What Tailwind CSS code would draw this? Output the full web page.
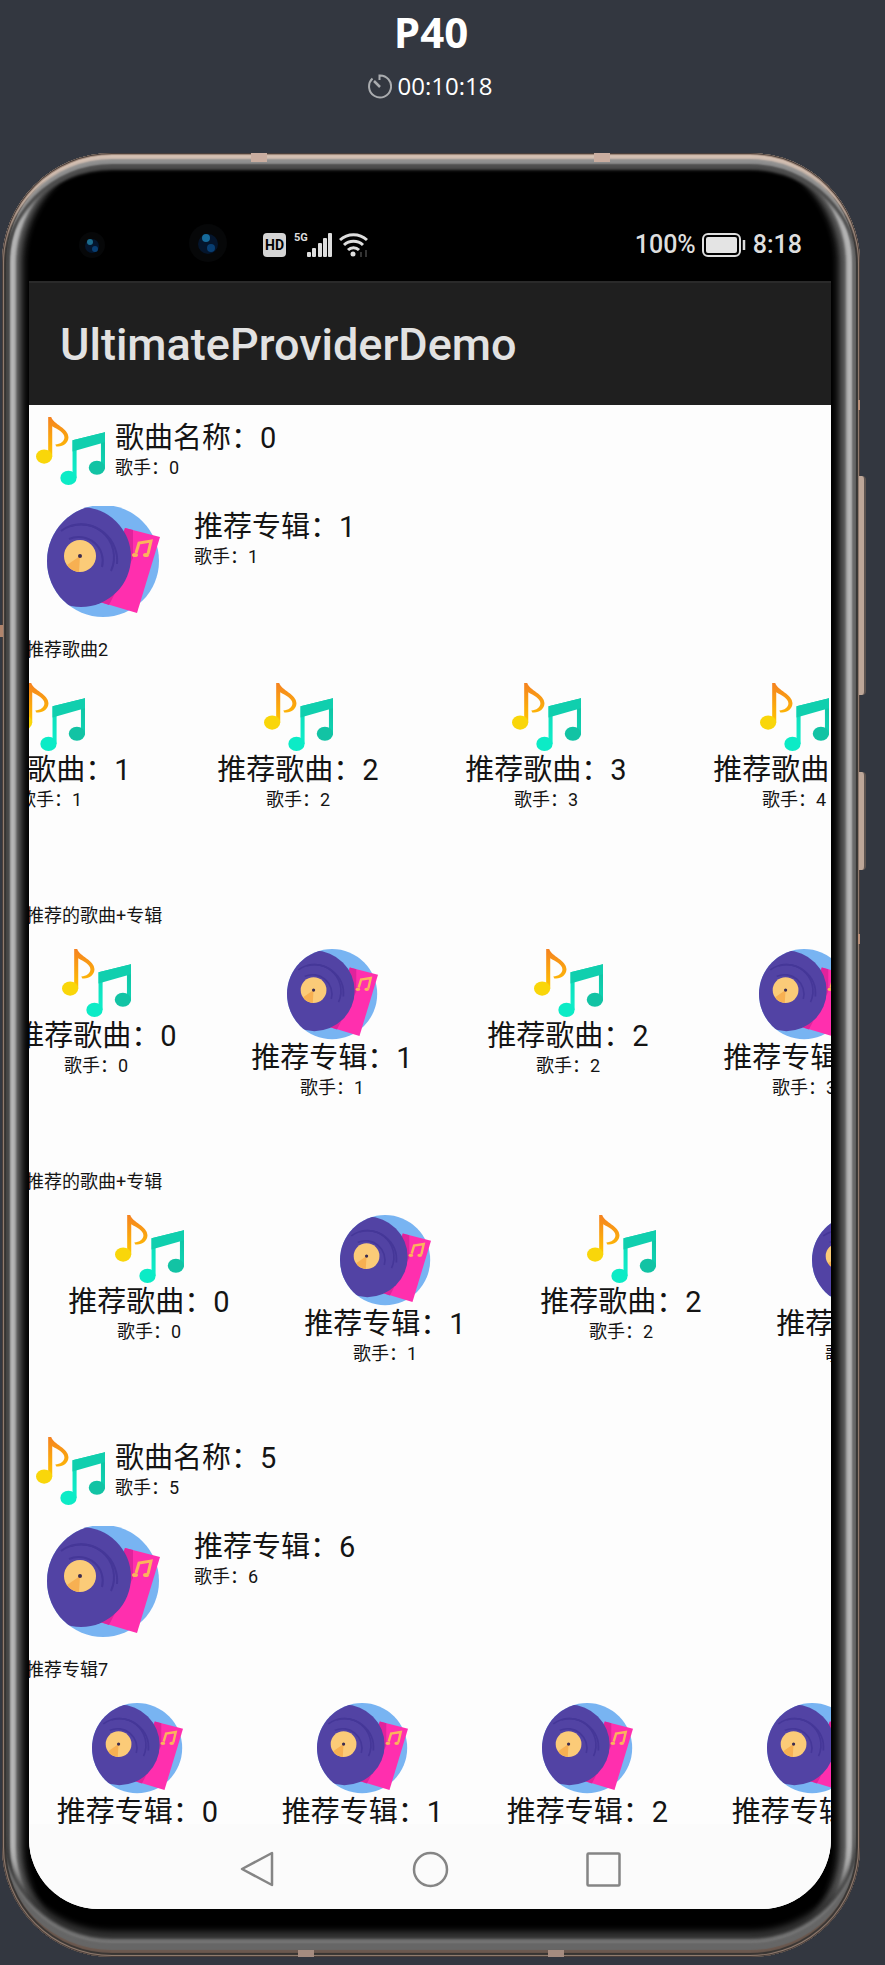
<!DOCTYPE html>
<html lang="zh-CN">
<head>
<meta charset="utf-8">
<meta name="viewport" content="width=device-width, initial-scale=1">
<title>P40</title>
<script src="https://cdn.jsdelivr.net/npm/@tailwindcss/browser@4"></script>
</head>
<body class="min-h-screen bg-[#333740] font-[Roboto,'Noto_Sans_CJK_SC',sans-serif] text-[#141414]">

<!-- Shared artwork -->
<svg class="absolute size-0" aria-hidden="true">
  <defs>
    <linearGradient id="gold" x1="0" y1="0" x2="0" y2="1"><stop offset="0" stop-color="#f58220"/><stop offset="1" stop-color="#ffc400"/></linearGradient>
    <linearGradient id="mint" x1="1" y1="0" x2="0" y2="1"><stop offset="0" stop-color="#0fbfa0"/><stop offset="1" stop-color="#0ff0cc"/></linearGradient>
    <clipPath id="round"><circle cx="56" cy="55" r="56"/></clipPath>
    <symbol id="song" viewBox="0 0 68 68">
      <path d="M12 39V0h3c2 7 17 11 17 20 0 6-6 10-12 9l-1-2c5 0 9-3 9-7 0-5-7-8-12-11v30z" fill="url(#gold)"/>
      <ellipse cx="8" cy="39" rx="8" ry="7" fill="#f9d60a"/>
      <path d="M36 60V23l32-8v36h-4V25l-24 7v28z" fill="url(#mint)"/>
      <path d="M36 23l32-8v10l-32 9z" fill="#10cfae"/>
      <ellipse cx="32" cy="60" rx="8" ry="7" fill="#0cebc6"/>
      <ellipse cx="60" cy="50" rx="8" ry="7" fill="#12c3a4"/>
    </symbol>
    <symbol id="album" viewBox="0 0 113 111">
      <circle cx="56" cy="55" r="56" fill="#78b4f2"/>
      <path d="M78 22l35 9-23 76-37-11z" fill="#ff2fae"/>
      <path d="M78 22l8 2v28L62 99l-9-3z" fill="#e0239c"/>
      <path d="M89 47l3-10 12-2-3 13" fill="none" stroke="#fbb45c" stroke-width="3"/>
      <ellipse cx="88" cy="49" rx="3" ry="2" fill="#fbb45c"/><ellipse cx="99" cy="49" rx="3" ry="2" fill="#fbb45c"/>
      <g clip-path="url(#round)">
        <circle cx="34" cy="51" r="50" fill="#5243a4"/>
        <g fill="none" stroke="#453798" stroke-width="2">
          <path d="M14 25a33 33 0 0 1 50 40"/><path d="M24 20a36 36 0 0 1 46 38"/><path d="M22 33a24 24 0 0 1 33 28"/>
        </g>
      </g>
      <circle cx="33" cy="50" r="16" fill="#fbcb78"/>
      <path d="M33 50l-13 9a16 16 0 0 0 12 7z" fill="#f7b052"/>
      <circle cx="33" cy="50" r="2" fill="#3b2c50"/>
    </symbol>
  </defs>
</svg>

<main class="pl-[2px] pr-[25px] pb-2">
  <header class="flex h-[153px] flex-col items-center font-['Open_Sans','Noto_Sans',sans-serif] text-white">
    <h1 class="mt-[4px] text-[42px] leading-[56px] font-bold">P40</h1>
    <div class="mt-[9px] flex items-center gap-[6px] pr-[3px] text-[24px] leading-[34px]">
      <svg class="size-[25px]" viewBox="0 0 25 25" fill="none" stroke="#aaacaf" stroke-width="2" aria-hidden="true"><path d="M5.500 4.500A11 11 0 1 0 12.500 1.500V6"/><path d="M7 7l6 6" stroke-width="2.500"/></svg>
      <time>00:10:18</time>
    </div>
  </header>

  <div class="relative rounded-[110px] bg-black pt-[20px] pr-[29px] pb-[48px] pl-[27px] shadow-[inset_0_0_0_1px_#4a3f3b,inset_0_0_1px_2px_#9a8375,inset_0_6px_2px_#d4c0b3,inset_0_0_1px_4px_#343231,inset_0_-7px_1px_#6b584e,inset_0_11px_2px_#8f8f8f,inset_0_17px_3px_#4d4d4d,inset_0_-14px_2px_#666,inset_0_-18px_3px_#777,inset_0_-26px_6px_#333,inset_8px_0_2px_#484848,inset_-8px_0_2px_#6a6a6a,inset_14px_0_3px_#b5b5b5,inset_-14px_0_3px_#b5b5b5,inset_19px_0_4px_#555,inset_-20px_0_4px_#555,inset_24px_0_4px_#1c1c1c,inset_-25px_0_4px_#1c1c1c]">
    <!-- Antenna bands and side keys -->
    <i class="absolute top-0 left-[29%] h-[9px] w-4 bg-[#c9ada0]"></i>
    <i class="absolute top-0 left-[69%] h-[9px] w-4 bg-[#c9ada0]"></i>
    <i class="absolute bottom-0 left-[34.500%] h-[7px] w-4 bg-[#a58c80]"></i>
    <i class="absolute bottom-0 right-[34.500%] h-[7px] w-4 bg-[#a58c80]"></i>
    <i class="absolute top-[472px] -left-[2px] h-[12px] w-[3px] bg-[#b0846c]"></i>
    <i class="absolute top-[247px] right-0 h-[10px] w-[2px] bg-[#b98f78]"></i>
    <i class="absolute top-[781px] right-0 h-[10px] w-[2px] bg-[#b98f78]"></i>
    <i class="absolute top-[323px] -right-[6px] h-[219px] w-[7px] rounded-r-sm border-r-2 border-[#5e5450] bg-[#bda698]"></i>
    <i class="absolute top-[619px] -right-[6px] h-[98px] w-[7px] rounded-r-sm border-r-2 border-[#5e5450] bg-[#bda698]"></i>

    <!-- Status bar -->
    <div class="flex h-[108px] items-center pt-[36px] pr-[29px] text-[25px] leading-[30px] font-medium text-[#dedede]">
      <svg class="ml-[48px] size-[30px]" viewBox="0 0 30 30" aria-hidden="true"><circle cx="15" cy="15" r="13" fill="#060708"/><circle cx="15" cy="16" r="7" fill="#04152c"/><circle cx="13" cy="12" r="3" fill="#1c6b8c"/><circle cx="18" cy="19" r="3" fill="#083e72"/></svg>
      <svg class="ml-[80px] size-[42px]" viewBox="0 0 42 42" aria-hidden="true"><circle cx="21" cy="19" r="19" fill="#060708"/><circle cx="21" cy="20" r="10" fill="#04152c"/><circle cx="19" cy="14" r="4" fill="#166a9a"/><circle cx="24" cy="24" r="4" fill="#083e72"/></svg>
      <span class="ml-[34px] flex h-[24px] w-[23px] items-center justify-center rounded-[4px] bg-[#d4d4d4] text-[14px] font-bold text-black">HD</span>
      <span class="ml-[8px] self-start pt-[23px] text-[11px] leading-[12px] font-bold">5G</span>
      <svg class="-ml-px h-[24px] w-[26px]" viewBox="0 0 26 24" fill="#dedede" aria-hidden="true"><rect x="0" y="19" width="4" height="5" rx="1"/><rect x="5" y="15" width="4" height="9" rx="1"/><rect x="11" y="10" width="4" height="14" rx="1"/><rect x="16" y="5" width="4" height="19" rx="1"/><rect x="21" y="0" width="4" height="24" rx="1"/></svg>
      <svg class="ml-[6px] h-[24px] w-[29px]" viewBox="0 0 29 24" fill="none" stroke="#dedede" stroke-width="3" aria-hidden="true"><path d="M1 7a20 20 0 0 1 27 0M5 12a14 14 0 0 1 19 0M9 17a8 8 0 0 1 11 0"/><circle cx="14" cy="21" r="2.500" fill="#dedede" stroke="none"/><path d="M22 19v5M27 17v7" stroke="#333" stroke-width="2"/></svg>
      <span class="ml-auto">100%</span>
      <svg class="ml-[6px] h-[24px] w-[44px]" viewBox="0 0 44 24" aria-hidden="true"><rect x="1" y="1" width="37" height="22" rx="5" fill="none" stroke="#dedede" stroke-width="2"/><rect x="4" y="4" width="31" height="16" rx="2" fill="#e4e4e4"/><path d="M42 7v10" stroke="#dedede" stroke-width="2.500"/></svg>
      <span class="ml-[7px]">8:18</span>
    </div>

    <!-- Screen -->
    <div class="relative overflow-hidden rounded-b-[70px] bg-[#fdfdfd]">
      <div class="flex h-[124px] items-center border-t-2 border-[#2a2a2a] bg-[#1f1f1f] px-[31px] pt-[2px]">
        <h2 class="text-[45px] leading-[52px] font-medium text-[#e2e2e2]">UltimateProviderDemo</h2>
      </div>

      <div class="pt-[11px] text-[18px] leading-[24px] whitespace-nowrap">
        <article class="flex h-[89px] gap-[10px] pl-[7px]">
          <svg class="mt-px size-[69px]"><use href="#song"/></svg>
          <div class="pt-[4px]"><h3 class="text-[29px] leading-[36px]">歌曲名称：0</h3><p>歌手：0</p></div>
        </article>
        <article class="flex h-[133px] gap-[34px] pl-[18px]">
          <svg class="mt-px h-[111px] w-[113px]"><use href="#album"/></svg>
          <div class="pt-[4px]"><h3 class="text-[29px] leading-[36px]">推荐专辑：1</h3><p>歌手：1</p></div>
        </article>

        <section class="h-[266px]">
          <h3 class="-ml-[3px]">推荐歌曲2</h3>
          <ul class="mt-[21px] -ml-[103px] flex">
            <li class="flex w-[248px] shrink-0 flex-col items-center"><svg class="size-[69px]"><use href="#song"/></svg><h4 class="text-[29px] leading-[36px]">推荐歌曲：1</h4><p>歌手：1</p></li>
            <li class="flex w-[248px] shrink-0 flex-col items-center"><svg class="size-[69px]"><use href="#song"/></svg><h4 class="text-[29px] leading-[36px]">推荐歌曲：2</h4><p>歌手：2</p></li>
            <li class="flex w-[248px] shrink-0 flex-col items-center"><svg class="size-[69px]"><use href="#song"/></svg><h4 class="text-[29px] leading-[36px]">推荐歌曲：3</h4><p>歌手：3</p></li>
            <li class="flex w-[248px] shrink-0 flex-col items-center"><svg class="size-[69px]"><use href="#song"/></svg><h4 class="text-[29px] leading-[36px]">推荐歌曲：4</h4><p>歌手：4</p></li>
          </ul>
        </section>

        <section class="h-[266px]">
          <h3 class="-ml-[3px]">推荐的歌曲+专辑</h3>
          <ul class="mt-[21px] -ml-[51px] flex">
            <li class="flex w-[236px] shrink-0 flex-col items-center"><svg class="size-[69px]"><use href="#song"/></svg><h4 class="text-[29px] leading-[36px]">推荐歌曲：0</h4><p>歌手：0</p></li>
            <li class="flex w-[236px] shrink-0 flex-col items-center"><svg class="h-[91px] w-[91px]"><use href="#album"/></svg><h4 class="text-[29px] leading-[36px]">推荐专辑：1</h4><p>歌手：1</p></li>
            <li class="flex w-[236px] shrink-0 flex-col items-center"><svg class="size-[69px]"><use href="#song"/></svg><h4 class="text-[29px] leading-[36px]">推荐歌曲：2</h4><p>歌手：2</p></li>
            <li class="flex w-[236px] shrink-0 flex-col items-center"><svg class="h-[91px] w-[91px]"><use href="#album"/></svg><h4 class="text-[29px] leading-[36px]">推荐专辑：3</h4><p>歌手：3</p></li>
          </ul>
        </section>

        <section class="h-[266px]">
          <h3 class="-ml-[3px]">推荐的歌曲+专辑</h3>
          <ul class="mt-[21px] ml-[2px] flex">
            <li class="flex w-[236px] shrink-0 flex-col items-center"><svg class="size-[69px]"><use href="#song"/></svg><h4 class="text-[29px] leading-[36px]">推荐歌曲：0</h4><p>歌手：0</p></li>
            <li class="flex w-[236px] shrink-0 flex-col items-center"><svg class="h-[91px] w-[91px]"><use href="#album"/></svg><h4 class="text-[29px] leading-[36px]">推荐专辑：1</h4><p>歌手：1</p></li>
            <li class="flex w-[236px] shrink-0 flex-col items-center"><svg class="size-[69px]"><use href="#song"/></svg><h4 class="text-[29px] leading-[36px]">推荐歌曲：2</h4><p>歌手：2</p></li>
            <li class="flex w-[236px] shrink-0 flex-col items-center"><svg class="h-[91px] w-[91px]"><use href="#album"/></svg><h4 class="text-[29px] leading-[36px]">推荐专辑：3</h4><p>歌手：3</p></li>
          </ul>
        </section>

        <article class="flex h-[89px] gap-[10px] pl-[7px]">
          <svg class="mt-px size-[69px]"><use href="#song"/></svg>
          <div class="pt-[4px]"><h3 class="text-[29px] leading-[36px]">歌曲名称：5</h3><p>歌手：5</p></div>
        </article>
        <article class="flex h-[133px] gap-[34px] pl-[18px]">
          <svg class="mt-px h-[111px] w-[113px]"><use href="#album"/></svg>
          <div class="pt-[4px]"><h3 class="text-[29px] leading-[36px]">推荐专辑：6</h3><p>歌手：6</p></div>
        </article>

        <section>
          <h3 class="-ml-[3px]">推荐专辑7</h3>
          <ul class="mt-[21px] -ml-[4px] flex">
            <li class="flex w-[225px] shrink-0 flex-col items-center"><svg class="h-[91px] w-[91px]"><use href="#album"/></svg><h4 class="h-[30px] overflow-hidden text-[29px] leading-[36px]">推荐专辑：0</h4></li>
            <li class="flex w-[225px] shrink-0 flex-col items-center"><svg class="h-[91px] w-[91px]"><use href="#album"/></svg><h4 class="h-[30px] overflow-hidden text-[29px] leading-[36px]">推荐专辑：1</h4></li>
            <li class="flex w-[225px] shrink-0 flex-col items-center"><svg class="h-[91px] w-[91px]"><use href="#album"/></svg><h4 class="h-[30px] overflow-hidden text-[29px] leading-[36px]">推荐专辑：2</h4></li>
            <li class="flex w-[225px] shrink-0 flex-col items-center"><svg class="h-[91px] w-[91px]"><use href="#album"/></svg><h4 class="h-[30px] overflow-hidden text-[29px] leading-[36px]">推荐专辑：3</h4></li>
          </ul>
        </section>
      </div>

      <nav class="flex h-[85px] items-center justify-center gap-[136px] bg-[#fbfbfb] pt-[6px]">
        <button type="button" aria-label="返回"><svg class="size-[37px]" viewBox="0 0 37 37" fill="none" stroke="#858585" stroke-width="2.500" stroke-linejoin="round"><path d="M33 2v32L3 18z"/></svg></button>
        <button type="button" aria-label="主页"><svg class="size-[37px]" viewBox="0 0 37 37" fill="none" stroke="#858585" stroke-width="2.500"><circle cx="18.500" cy="18.500" r="16.500"/></svg></button>
        <button type="button" aria-label="最近任务"><svg class="size-[37px]" viewBox="0 0 37 37" fill="none" stroke="#858585" stroke-width="2.500"><rect x="2.500" y="2.500" width="32" height="32" rx="1"/></svg></button>
      </nav>
    </div>
  </div>
</main>
</body>
</html>
